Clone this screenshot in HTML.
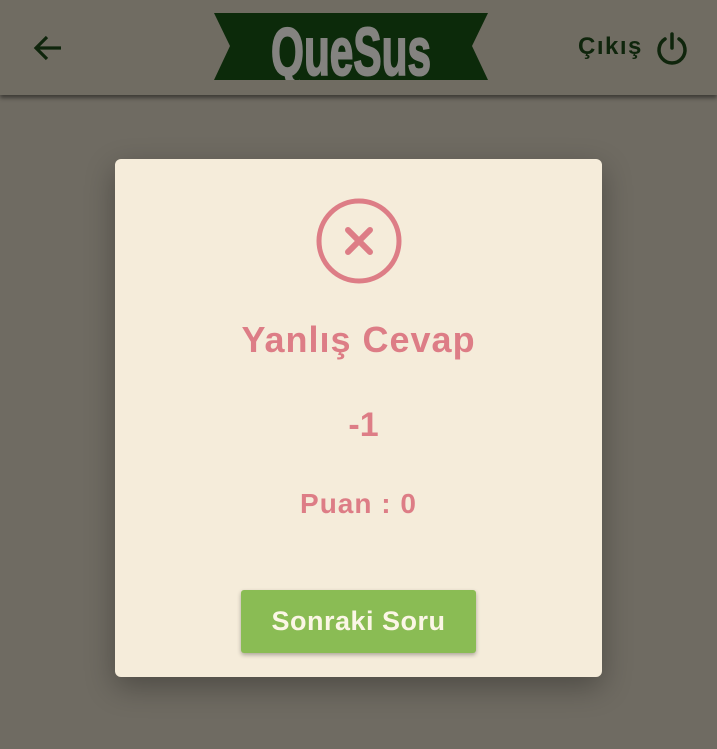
<!DOCTYPE html>
<html><head><meta charset="utf-8"><style>
*{margin:0;padding:0;box-sizing:border-box}
body{width:717px;height:749px;background:#6f6b62;position:relative;overflow:hidden;font-family:"Liberation Sans",sans-serif;font-weight:bold}
.hdr{position:absolute;left:0;top:0;width:717px;height:95px;background:#706c62;box-shadow:0 3px 4px rgba(0,0,0,.45)}
.card{position:absolute;left:115px;top:159px;width:487px;height:518px;background:#f5ecda;border-radius:6px;box-shadow:0 10px 30px rgba(0,0,0,.3)}
.pink{color:#dd7d86;position:absolute;width:100%;text-align:center}
.btn{position:absolute;left:126px;top:431px;width:235px;height:63px;background:#8abc54;border-radius:3px;color:#fbf6e6;font-size:27px;letter-spacing:0.5px;text-align:center;line-height:63px;box-shadow:0 2px 4px rgba(0,0,0,.3)}
</style></head><body>
<div class="hdr">
<svg style="position:absolute;left:30px;top:30px" width="36" height="36" viewBox="0 0 36 36"><path d="M31 18H7M17 7L6 18l11 11" stroke="#0f250c" stroke-width="3.2" fill="none"/></svg>
<svg style="position:absolute;left:214px;top:13px" width="274" height="67" viewBox="0 0 274 67"><polygon points="0,0 274,0 258,33 274,67 0,67 16,33" fill="#0c2a0a"/>
<g transform="translate(137,62) scale(1,1.3)"><text x="0" y="0" text-anchor="middle" font-family="Liberation Sans Narrow, Liberation Sans, sans-serif" font-weight="bold" font-size="52" fill="#848380" stroke="#848380" stroke-width="1.5" textLength="160" lengthAdjust="spacingAndGlyphs">QueSus</text></g></svg>
<div style="position:absolute;left:578px;top:33px;font-size:24px;letter-spacing:1.5px;color:#0f250c">Çıkış</div>
<svg style="position:absolute;left:653px;top:30px" width="38" height="38" viewBox="0 0 38 38"><path d="M12 9A13 13 0 1 0 26 9" stroke="#0f250c" stroke-width="3.5" fill="none" stroke-linecap="round"/><path d="M19 4V18" stroke="#0f250c" stroke-width="3.5" stroke-linecap="round"/></svg>
</div>
<div class="card">
<svg style="position:absolute;left:200px;top:38px" width="88" height="88" viewBox="0 0 88 88"><circle cx="44" cy="44" r="40" stroke="#dd7d86" stroke-width="5" fill="none"/><path d="M33 33L55 55M55 33L33 55" stroke="#dd7d86" stroke-width="6" stroke-linecap="round"/></svg>
<div class="pink" style="top:160px;font-size:36px;letter-spacing:1px">Yanlış Cevap</div>
<div class="pink" style="top:247px;font-size:34px;left:5px">-1</div>
<div class="pink" style="top:329px;font-size:28px;letter-spacing:1px">Puan : 0</div>
<div class="btn">Sonraki Soru</div>
</div>
</body></html>
